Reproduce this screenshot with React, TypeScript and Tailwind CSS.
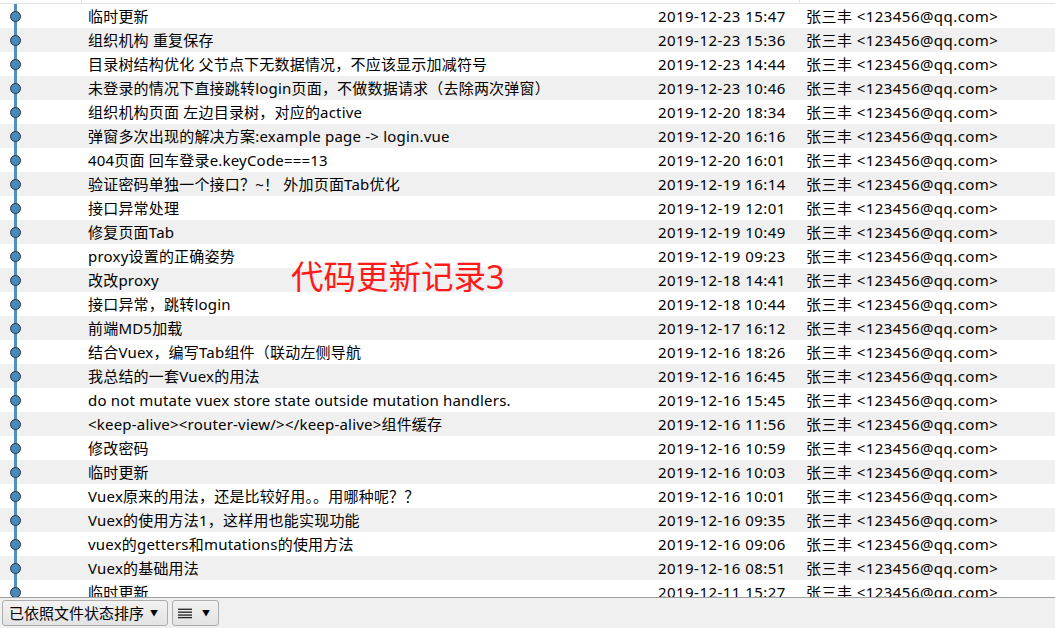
import React from "react";

const rows: [string, string][] = [
  ["临时更新", "2019-12-23 15:47"],
  ["组织机构 重复保存", "2019-12-23 15:36"],
  ["目录树结构优化 父节点下无数据情况，不应该显示加减符号", "2019-12-23 14:44"],
  ["未登录的情况下直接跳转login页面，不做数据请求（去除两次弹窗）", "2019-12-23 10:46"],
  ["组织机构页面 左边目录树，对应的active", "2019-12-20 18:34"],
  ["弹窗多次出现的解决方案:example page -> login.vue", "2019-12-20 16:16"],
  ["404页面 回车登录e.keyCode===13", "2019-12-20 16:01"],
  ["验证密码单独一个接口？~！ 外加页面Tab优化", "2019-12-19 16:14"],
  ["接口异常处理", "2019-12-19 12:01"],
  ["修复页面Tab", "2019-12-19 10:49"],
  ["proxy设置的正确姿势", "2019-12-19 09:23"],
  ["改改proxy", "2019-12-18 14:41"],
  ["接口异常，跳转login", "2019-12-18 10:44"],
  ["前端MD5加载", "2019-12-17 16:12"],
  ["结合Vuex，编写Tab组件（联动左侧导航", "2019-12-16 18:26"],
  ["我总结的一套Vuex的用法", "2019-12-16 16:45"],
  ["do not mutate vuex store state outside mutation handlers.", "2019-12-16 15:45"],
  ["<keep-alive><router-view/></keep-alive>组件缓存", "2019-12-16 11:56"],
  ["修改密码", "2019-12-16 10:59"],
  ["临时更新", "2019-12-16 10:03"],
  ["Vuex原来的用法，还是比较好用。。用哪种呢？？", "2019-12-16 10:01"],
  ["Vuex的使用方法1，这样用也能实现功能", "2019-12-16 09:35"],
  ["vuex的getters和mutations的使用方法", "2019-12-16 09:06"],
  ["Vuex的基础用法", "2019-12-16 08:51"],
  ["临时更新", "2019-12-11 15:27"],
];

const font = { fontFamily: '"Noto Sans", "Noto Sans CJK SC", sans-serif' };

function Node() {
  return (
    <div className="relative w-[30px] h-full shrink-0 flex items-center justify-center">
      <div className="absolute left-[14px] top-0 bottom-0 w-[3px] bg-[#4f90bd]" />
      <div className="relative w-[11px] h-[11px] rounded-full bg-[#4a8ab6] border border-[#1e3a50]" />
    </div>
  );
}

export default function App() {
  return (
    <div className="w-[1055px] h-[628px] bg-white flex flex-col overflow-hidden relative text-[#000]" style={font}>
      <div className="h-[4px] shrink-0 border-b border-[#e3e3e3] flex">
        <div className="w-[82px] border-r border-[#e3e3e3]" />
        <div className="w-[718px] border-r border-[#e3e3e3]" />
      </div>
      <div className="flex-1 overflow-hidden border-b border-[#a0a0a0]">
        {rows.map(([msg, date], i) => (
          <div
            key={i}
            className={`h-[24px] flex items-center text-[15px] leading-[24px] whitespace-nowrap ${i % 2 === 1 ? "bg-[#f0f0f0]" : "bg-white"}`}
          >
            <Node />
            <div className="w-[628px] pl-[58px] shrink-0 tracking-[0.2px]">{msg}</div>
            <div className="w-[148px] shrink-0 tracking-[0.45px]">{date}</div>
            <div className="tracking-[0.45px]">张三丰 &lt;123456@qq.com&gt;</div>
          </div>
        ))}
      </div>
      <div className="h-[30px] shrink-0 bg-[#f0f0f0] flex items-center gap-[4px] pl-[2px]">
        <div className="h-[26px] w-[166px] rounded-[3px] border border-[#acacac] bg-gradient-to-b from-[#f2f2f2] to-[#e3e3e3] flex items-center pl-[6px] pr-[9px] text-[15px]">
          <span className="flex-1">已依照文件状态排序</span>
          <span className="text-[8px]">▼</span>
        </div>
        <div className="h-[26px] w-[47px] rounded-[3px] border border-[#acacac] bg-gradient-to-b from-[#f2f2f2] to-[#e3e3e3] flex items-center pl-[5px] pr-[8px] gap-[10px]">
          <svg width="16" height="12" viewBox="0 0 16 12">
            <rect x="0" y="1" width="16" height="1.5" fill="#222" />
            <rect x="0" y="4.3" width="16" height="1.5" fill="#222" />
            <rect x="0" y="7.6" width="16" height="1.5" fill="#222" />
            <rect x="0" y="10.5" width="16" height="1.5" fill="#222" />
          </svg>
          <span className="text-[8px]">▼</span>
        </div>
      </div>
      <div className="absolute left-[291px] top-[261px] text-[32.5px] text-[#ff1a1a] leading-none" style={font}>
        代码更新记录3
      </div>
    </div>
  );
}
